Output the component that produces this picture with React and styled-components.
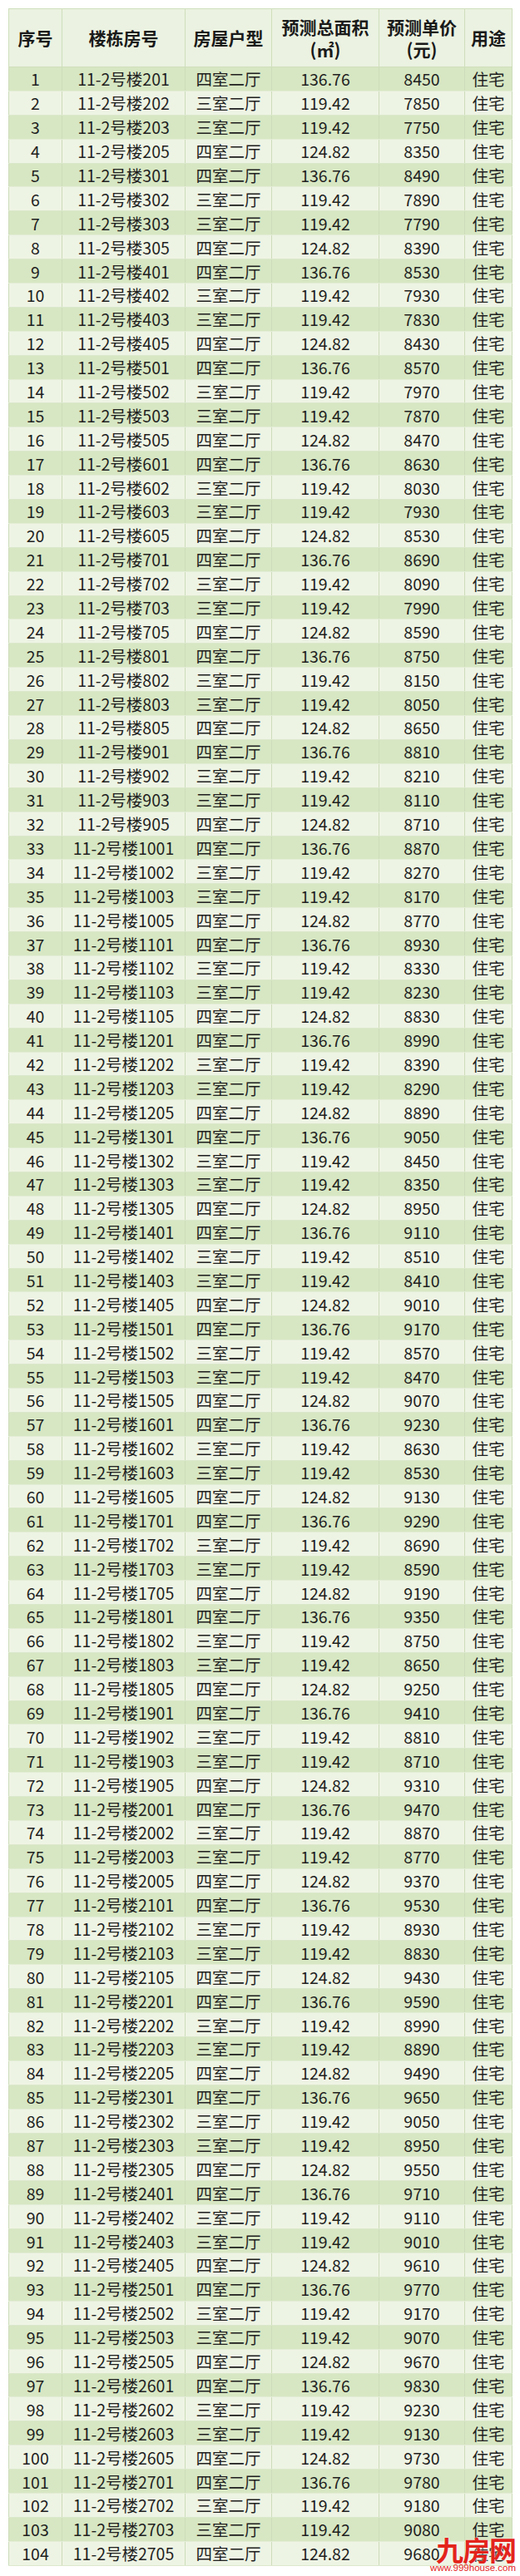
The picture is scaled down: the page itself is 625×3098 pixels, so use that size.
import styled, { createGlobalStyle } from 'styled-components'

const GlobalStyle = createGlobalStyle`
  html, body {
    margin: 0;
    padding: 0;
    background: #ffffff;
  }
  body {
    font-family: "Noto Sans CJK SC", "Noto Sans", sans-serif;
    color: #1f1f1f;
  }
`

const Page = styled.div`
  position: relative;
  width: 625px;
  height: 3098px;
  padding: 10px 0 0 10px;
  box-sizing: border-box;
  overflow: hidden;
`

const Table = styled.table`
  width: 605px;
  table-layout: fixed;
  border-collapse: collapse;
  border: 1px solid #c8d9b3;
`

const HeadCell = styled.th`
  height: 69px;
  padding: 0;
  background: #ebf2e1;
  border: 1px solid #cfdfbc;
  font-size: 21px;
  font-weight: 700;
  line-height: 27px;
  text-align: center;
  vertical-align: middle;
  color: #1a1a1a;
`

const Row = styled.tr`
  height: 28.9px;
  background: ${(p) => (p.$odd ? '#d7e7c3' : '#eef4e4')};
`

const Cell = styled.td`
  padding: 0;
  border-left: 1px solid #cddcba;
  border-right: 1px solid #cddcba;
  border-bottom: 1px solid ${(p) => (p.$odd ? '#e3edd6' : '#dbe8cb')};
  font-size: 19.5px;
  line-height: 27px;
  text-align: center;
  vertical-align: middle;
  white-space: nowrap;
`

const Watermark = styled.div`
  position: absolute;
  right: 5px;
  bottom: 3px;
  display: flex;
  flex-direction: column;
  align-items: flex-end;
  color: #e3241c;
  pointer-events: none;
`

const MarkTitle = styled.div`
  font-size: 33px;
  font-weight: 700;
  line-height: 32px;
  letter-spacing: -1px;
  text-shadow: 0 0 2px #ffffff;
`

const MarkUrl = styled.div`
  font-family: "Liberation Sans", Arial, sans-serif;
  font-size: 11.5px;
  line-height: 13px;
`

const columns = [
  { title: '序号', width: 64 },
  { title: '楼栋房号', width: 148 },
  { title: '房屋户型', width: 104 },
  { title: ['预测总面积', '(㎡)'], width: 129 },
  { title: ['预测单价', '(元)'], width: 103 },
  { title: '用途', width: 57 },
]

// base price of unit x01 on floors 2..27
const floorBase = [
  8450, 8490, 8530, 8570, 8630, 8690, 8750, 8810, 8870, 8930, 8990, 9050, 9110,
  9170, 9230, 9290, 9350, 9410, 9470, 9530, 9590, 9650, 9710, 9770, 9830, 9780,
]

const units = [
  { no: '01', type: '四室二厅', area: '136.76', diff: 0 },
  { no: '02', type: '三室二厅', area: '119.42', diff: -600 },
  { no: '03', type: '三室二厅', area: '119.42', diff: -700 },
  { no: '05', type: '四室二厅', area: '124.82', diff: -100 },
]

const rows = floorBase.flatMap((base, i) =>
  units.map((u) => ({
    room: `11-2号楼${i + 2}${u.no}`,
    type: u.type,
    area: u.area,
    price: base + u.diff,
  }))
)

function App() {
  return (
    <>
      <GlobalStyle />
      <Page>
        <Table>
          <colgroup>
            {columns.map((c, i) => (
              <col key={i} style={{ width: c.width }} />
            ))}
          </colgroup>
          <thead>
            <tr>
              {columns.map((c, i) => (
                <HeadCell key={i}>
                  {Array.isArray(c.title) ? (
                    <>
                      {c.title[0]}
                      <br />
                      {c.title[1]}
                    </>
                  ) : (
                    c.title
                  )}
                </HeadCell>
              ))}
            </tr>
          </thead>
          <tbody>
            {rows.map((r, i) => {
              const odd = i % 2 === 0
              return (
                <Row key={i} $odd={odd}>
                  <Cell $odd={odd}>{i + 1}</Cell>
                  <Cell $odd={odd}>{r.room}</Cell>
                  <Cell $odd={odd}>{r.type}</Cell>
                  <Cell $odd={odd}>{r.area}</Cell>
                  <Cell $odd={odd}>{r.price}</Cell>
                  <Cell $odd={odd}>住宅</Cell>
                </Row>
              )
            })}
          </tbody>
        </Table>
        <Watermark>
          <MarkTitle>九房网</MarkTitle>
          <MarkUrl>www.999house.com</MarkUrl>
        </Watermark>
      </Page>
    </>
  )
}

export default App
